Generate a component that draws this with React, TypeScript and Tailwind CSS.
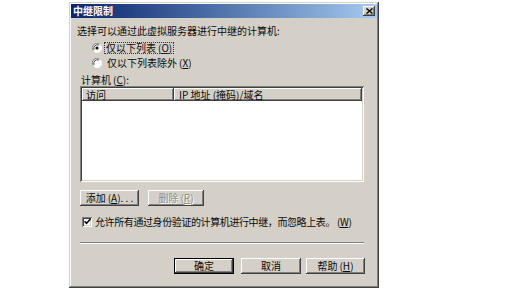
const raised =
  'bg-[#d4d0c8] shadow-[inset_-1px_-1px_#404040,inset_1px_1px_#ffffff,inset_-2px_-2px_#808080,inset_2px_2px_#d4d0c8]'
const sunken =
  'shadow-[inset_1px_1px_#808080,inset_-1px_-1px_#ffffff,inset_2px_2px_#404040,inset_-2px_-2px_#d4d0c8]'

function Key({ k }: { k: string }) {
  return (
    <span className="ml-[2px]">
      (<span className="underline underline-offset-[1px]">{k}</span>)
    </span>
  )
}

function Radio({ checked }: { checked?: boolean }) {
  return (
    <svg width="10" height="10" viewBox="0 0 10 10" className="shrink-0">
      <circle cx="5" cy="5" r="4.5" fill="#ffffff" />
      <path d="M1.2 7.5 A4.5 4.5 0 0 1 7.5 1.2" stroke="#808080" strokeWidth="1" fill="none" />
      <path d="M2.2 6.8 A3.4 3.4 0 0 1 6.8 2.2" stroke="#404040" strokeWidth="1" fill="none" />
      <path d="M8.8 2.5 A4.5 4.5 0 0 1 2.5 8.8" stroke="#ffffff" strokeWidth="1" fill="none" />
      {checked && <circle cx="5" cy="5" r="1.6" fill="#111111" />}
    </svg>
  )
}

function Button({
  label,
  k,
  width,
  disabled,
  suffix,
}: {
  label: string
  k: string
  width: string
  disabled?: boolean
  suffix?: string
}) {
  return (
    <div
      className={`${width} h-[16px] ${raised} flex items-center justify-center ${
        disabled ? 'text-[#8a8a8a] [text-shadow:1px_1px_#ffffff]' : ''
      }`}
    >
      {label}
      <Key k={k} />
      {suffix}
    </div>
  )
}

export default function App() {
  return (
    <div className="w-[524px] h-[291px] bg-white overflow-hidden font-['Noto_Sans_CJK_SC','Liberation_Sans',sans-serif] text-[10px] leading-[12px] text-[#0a0a0a]">
      <div className="ml-[69px] mt-[2px] w-[310px] h-[286px] bg-[#d4d0c8] p-[2px] flex flex-col shadow-[inset_-1px_-1px_#404040,inset_1px_1px_#d4d0c8,inset_-2px_-2px_#808080,inset_2px_2px_#ffffff]">
        {/* title bar */}
        <div className="h-[14px] bg-linear-to-r from-[#0a246a] to-[#a6caf0] flex items-center justify-between pl-[2px] pr-[2px]">
          <span className="text-white font-bold text-[10px] leading-[12px]">中继限制</span>
          <div className={`w-[12px] h-[10px] ${raised} flex items-center justify-center`}>
            <svg width="7" height="6" viewBox="0 0 7 6">
              <path d="M0.5 0.5 L6.5 5.5 M6.5 0.5 L0.5 5.5" stroke="#000000" strokeWidth="1.4" />
            </svg>
          </div>
        </div>

        <div className="flex flex-col pl-[9px] pr-[11px]">
          <p className="mt-[7px] ml-[-3px]">选择可以通过此虚拟服务器进行中继的计算机:</p>

          <div className="mt-[5px] ml-[12px] flex items-center h-[12px]">
            <Radio checked />
            <span className="ml-[3px] px-[1px] outline outline-dotted outline-[#333333] leading-[10px]">
              仅以下列表
              <Key k="O" />
            </span>
          </div>
          <div className="mt-[3px] ml-[12px] flex items-center h-[12px]">
            <Radio />
            <span className="ml-[5px]">
              仅以下列表除外
              <Key k="X" />
            </span>
          </div>

          <p className="mt-[5px] ml-[1px]">
            计算机
            <Key k="C" />:
          </p>

          {/* list view */}
          <div className={`w-[284px] h-[96px] bg-white p-[2px] ${sunken}`}>
            <div className="flex h-[13px]">
              <div className={`w-[92px] h-full ${raised} pl-[4px] flex items-center`}>访问</div>
              <div className={`flex-1 h-full ${raised} pl-[5px] flex items-center`}>IP 地址 (掩码)/域名</div>
            </div>
          </div>

          <div className="mt-[8px] flex gap-[9px]">
            <Button label="添加" k="A" suffix=". . ." width="w-[59px]" />
            <Button label="删除" k="R" width="w-[56px]" disabled />
          </div>

          <div className="mt-[10px] ml-[2px] flex items-center h-[11px]">
            <div className={`w-[10px] h-[10px] bg-white ${sunken} flex items-center justify-center shrink-0`}>
              <svg width="7" height="7" viewBox="0 0 7 7">
                <path d="M0.5 3.2 L2.5 5.3 L6.5 1" stroke="#000000" strokeWidth="1.5" fill="none" />
              </svg>
            </div>
            <span className="ml-[3px] tracking-[-0.4px]">
              允许所有通过身份验证的计算机进行中继，而忽略上表。
              <Key k="W" />
            </span>
          </div>

          <div className="mt-[15px] w-[284px] h-[2px] border-t border-t-[#808080] border-b border-b-white" />

          <div className="mt-[14px] flex">
            <div className="ml-[94px] mr-[7px] w-[60px] h-[16px] border border-[#000000]">
              <div className={`w-full h-full ${raised} flex items-center justify-center`}>确定</div>
            </div>
            <div className={`w-[60px] h-[16px] mr-[5px] ${raised} flex items-center justify-center`}>取消</div>
            <Button label="帮助" k="H" width="w-[59px]" />
          </div>
        </div>
      </div>
    </div>
  )
}
